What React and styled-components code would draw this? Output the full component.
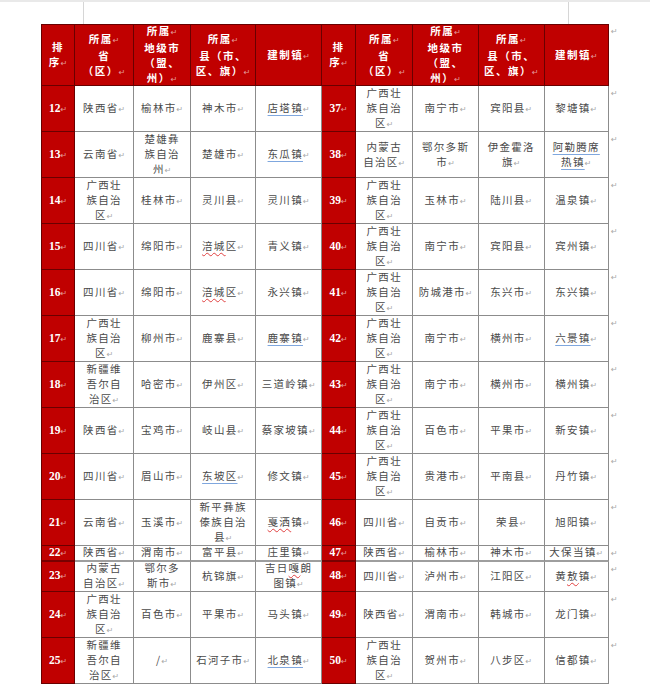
import React from "react";
import styled, { createGlobalStyle, css } from "styled-components";

const GlobalStyle = createGlobalStyle`
  html, body { margin: 0; padding: 0; background: #ffffff; }
  body { font-family: "Noto Sans CJK SC", "Noto Sans", sans-serif; }
`;

const COLS = [34, 59.3, 56.7, 65.3, 65.7, 34.3, 57, 65.7, 65.6, 64.4];
const ROWS = [62, 46, 46, 46, 46, 46, 46, 46, 46, 46, 46, 15.5, 30.5, 46, 46];

const RED = "#c00000";
const LINE = "rgba(0,0,0,0.45)";

const Page = styled.div`
  width: 650px;
  min-height: 694px;
  background: #fff;
`;

const TopEdge = styled.div`
  height: 2px;
  background: #e9e9e9;
`;

const MarginStrip = styled.div`
  height: 22px;
  display: flex;
`;

const CropMark = styled.div`
  width: 1px;
  height: 100%;
  background: #d6d6d6;
  margin-left: ${(p) => p.$offset}px;
`;

const Grid = styled.div`
  margin-left: 41px;
  display: grid;
  grid-template-columns: ${COLS.map((c) => c + "px").join(" ")} 22px;
  grid-template-rows: ${ROWS.map((r) => r + "px").join(" ")};
`;

const Cell = styled.div`
  box-sizing: border-box;
  display: flex;
  flex-direction: column;
  align-items: center;
  justify-content: center;
  text-align: center;
  overflow: visible;
  border-right: 1px solid ${LINE};
  border-bottom: ${(p) => (p.$thick ? 2 : 1)}px solid ${(p) => (p.$thick ? "rgba(0,0,0,0.38)" : LINE)};
  ${(p) => p.$first && css`border-left: 1px solid ${LINE};`}
  ${(p) => p.$top && css`border-top: 1px solid ${LINE};`}
  line-height: 15px;
  font-size: 10.5px;
  letter-spacing: 1.3px;
  ${(p) =>
    p.$kind === "head" &&
    css`
      background: ${RED};
      color: #ffffff;
      font-weight: 700;
      letter-spacing: 1.5px;
    `}
  ${(p) =>
    p.$kind === "num" &&
    css`
      background: ${RED};
      color: #ffffff;
      font-family: "Liberation Serif", "Times New Roman", serif;
      font-weight: 700;
      font-size: 11.5px;
      letter-spacing: 0;
    `}
  ${(p) =>
    p.$kind === "body" &&
    css`
      background: #ffffff;
      color: #4a4a4a;
    `}
`;

const EndCell = styled.div`
  display: flex;
  align-items: flex-start;
  padding-left: 2px;
  line-height: 15px;
`;

const Line = styled.span`
  display: block;
  white-space: nowrap;
`;

const Mark = styled.span`
  font-family: "DejaVu Sans", sans-serif;
  font-weight: 400;
  font-size: 8px;
  letter-spacing: 0;
  color: ${(p) => (p.$light ? "rgba(255,255,255,0.6)" : "#a8a8a8")};
`;

const Blue = styled.span`
  text-decoration: underline;
  text-decoration-color: #7fa7de;
  text-underline-offset: 3px;
  text-decoration-thickness: 1px;
`;

const Red = styled.span`
  text-decoration: underline wavy;
  text-decoration-color: #e04040;
  text-underline-offset: 2px;
  text-decoration-thickness: 1px;
`;

function segments(line) {
  return line
    .split(/(_[^_]+_|~[^~]+~)/)
    .filter(Boolean)
    .map((s, i) => {
      if (s.startsWith("_")) return <Blue key={i}>{s.slice(1, -1)}</Blue>;
      if (s.startsWith("~")) return <Red key={i}>{s.slice(1, -1)}</Red>;
      return <React.Fragment key={i}>{s}</React.Fragment>;
    });
}

function CellText({ text, light }) {
  const paras = String(text).split("¶");
  const out = [];
  paras.forEach((p, pi) => {
    const lines = p.split("|");
    lines.forEach((l, li) => {
      out.push(
        <Line key={pi + "-" + li}>
          {segments(l)}
          {li === lines.length - 1 && <Mark $light={light}>↵</Mark>}
        </Line>
      );
    });
  });
  return out;
}

const HEAD = ["排|序", "所属¶省|（区）", "所属¶地级市|（盟、|州）", "所属¶县（市、|区、旗）", "建制镇"];

const LEFT = [
  [12, "陕西省", "榆林市", "神木市", "_店塔镇_"],
  [13, "云南省", "楚雄彝|族自治|州", "楚雄市", "_东瓜镇_"],
  [14, "广西壮|族自治|区", "桂林市", "灵川县", "灵川镇"],
  [15, "四川省", "绵阳市", "~涪城~区", "青义镇"],
  [16, "四川省", "绵阳市", "~涪城~区", "永兴镇"],
  [17, "广西壮|族自治|区", "柳州市", "鹿寨县", "_鹿寨镇_"],
  [18, "新疆维|吾尔自|治区", "哈密市", "伊州区", "三道岭镇"],
  [19, "陕西省", "宝鸡市", "岐山县", "蔡家坡镇"],
  [20, "四川省", "眉山市", "_东坡区_", "修文镇"],
  [21, "云南省", "玉溪市", "新平彝族|傣族自治|县", "~戛洒~镇"],
  [22, "陕西省", "渭南市", "富平县", "庄里镇"],
  [23, "内蒙古|自治区", "鄂尔多|斯市", "杭锦旗", "吉日~嘎~朗|图镇"],
  [24, "广西壮|族自治|区", "百色市", "平果市", "马头镇"],
  [25, "新疆维|吾尔自|治区", "/", "石河子市", "_北泉镇_"],
];

const RIGHT = [
  [37, "广西壮|族自治|区", "南宁市", "宾阳县", "黎塘镇"],
  [38, "内蒙古|自治区", "鄂尔多斯|市", "伊金霍洛|旗", "_阿勒腾席_|_热镇_"],
  [39, "广西壮|族自治|区", "玉林市", "陆川县", "温泉镇"],
  [40, "广西壮|族自治|区", "南宁市", "宾阳县", "宾州镇"],
  [41, "广西壮|族自治|区", "防城港市", "东兴市", "东兴镇"],
  [42, "广西壮|族自治|区", "南宁市", "横州市", "_六景镇_"],
  [43, "广西壮|族自治|区", "南宁市", "横州市", "横州镇"],
  [44, "广西壮|族自治|区", "百色市", "平果市", "新安镇"],
  [45, "广西壮|族自治|区", "贵港市", "平南县", "丹竹镇"],
  [46, "四川省", "自贡市", "荣县", "旭阳镇"],
  [47, "陕西省", "榆林市", "神木市", "大保当镇"],
  [48, "四川省", "泸州市", "江阳区", "黄~敖~镇"],
  [49, "陕西省", "渭南市", "韩城市", "龙门镇"],
  [50, "广西壮|族自治|区", "贺州市", "八步区", "信都镇"],
];

function RowCells({ row, first, thick }) {
  const [n, ...rest] = row;
  return (
    <>
      <Cell $kind="num" $first={first} $thick={thick}>
        <CellText text={String(n)} light />
      </Cell>
      {rest.map((t, i) => (
        <Cell key={i} $kind="body" $thick={thick}>
          <CellText text={t} />
        </Cell>
      ))}
    </>
  );
}

export default function App() {
  return (
    <Page>
      <GlobalStyle />
      <TopEdge />
      <MarginStrip>
        <CropMark $offset={83} />
        <CropMark $offset={484} />
      </MarginStrip>
      <Grid>
        {[0, 1].map((half) =>
          HEAD.map((h, i) => (
            <Cell key={"h" + half + i} $kind="head" $top $first={half === 0 && i === 0}>
              <CellText text={h} light />
            </Cell>
          ))
        )}
        <EndCell>
          <Mark>↵</Mark>
        </EndCell>
        {LEFT.map((row, ri) => (
          <React.Fragment key={ri}>
            <RowCells row={row} first thick={ri === 10} />
            <RowCells row={RIGHT[ri]} thick={ri === 10} />
            <EndCell>
              <Mark>↵</Mark>
            </EndCell>
          </React.Fragment>
        ))}
      </Grid>
    </Page>
  );
}
